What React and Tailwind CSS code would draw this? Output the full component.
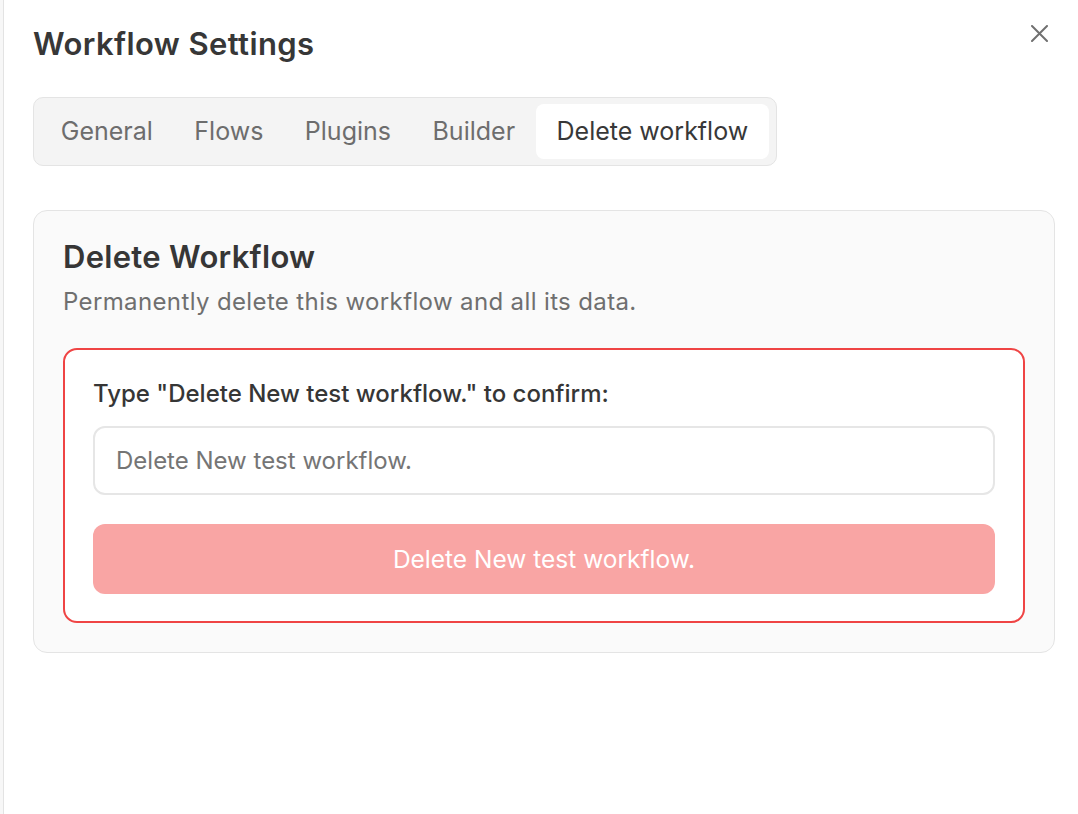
const tabs = ['General', 'Flows', 'Plugins', 'Builder', 'Delete workflow'];

export default function App() {
  const name = 'Delete New test workflow.';
  return (
    <div
      className="flex h-[814px] w-[1078px] overflow-hidden bg-[#f7f7f7]"
      style={{ fontFamily: 'Inter, "Noto Sans", sans-serif' }}
    >
      <div className="w-[3px] shrink-0 bg-[#f7f7f7]" />
      <div className="relative flex-1 border-l border-[#e3e3e3] bg-white pl-[29px] pr-[23px] pt-[26px]">
        <button className="absolute left-[1027px] top-[25px] text-[#707070]">
          <svg width="17" height="17" viewBox="0 0 17 17" fill="none" stroke="currentColor" strokeWidth="2" strokeLinecap="round">
            <path d="M1 1L16 16M16 1L1 16" />
          </svg>
        </button>

        <h1 className="text-[31px] font-semibold leading-[36px] tracking-[0.4px] text-[#373737]">
          Workflow Settings
        </h1>

        <div className="mt-[35px] inline-flex rounded-[10px] border border-[#e4e4e4] bg-[#f4f4f4] py-[6px] pl-[6px] pr-[7px]">
          {tabs.map((t, i) => {
            const active = i === tabs.length - 1;
            return (
              <div
                key={t}
                className={`flex h-[55px] items-center rounded-[8px] px-[20.75px] text-[25px] ${
                  active ? 'bg-white text-[#383838]' : 'text-[#6d6d6d]'
                }`}
              >
                {t}
              </div>
            );
          })}
        </div>

        <div className="mt-[44px] rounded-[14px] border border-[#e4e4e4] bg-[#fafafa] p-[29px]">
          <h2 className="text-[31px] font-semibold leading-[34px] tracking-[0.3px] text-[#363636]">
            Delete Workflow
          </h2>
          <p className="mt-[12px] text-[24px] leading-[32px] tracking-[0.37px] text-[#6f6f6f]">
            Permanently delete this workflow and all its data.
          </p>

          <div className="mt-[30px] rounded-[14px] border-2 border-[#ef4444] bg-white px-[28px] pb-[27px] pt-[28px]">
            <label className="block text-[24px] font-medium leading-[32px] text-[#363636]">
              Type "{name}" to confirm:
            </label>
            <input
              className="mt-[16px] h-[69px] w-full rounded-[12px] border-2 border-[#e6e6e6] bg-white px-[21px] text-[24px] text-[#363636] outline-none placeholder:text-[#757575]"
              placeholder={name}
            />
            <button className="mt-[29px] flex h-[70px] w-full items-center justify-center rounded-[12px] bg-[#f9a5a4] text-[24.5px] text-white">
              {name}
            </button>
          </div>
        </div>
      </div>
    </div>
  );
}
